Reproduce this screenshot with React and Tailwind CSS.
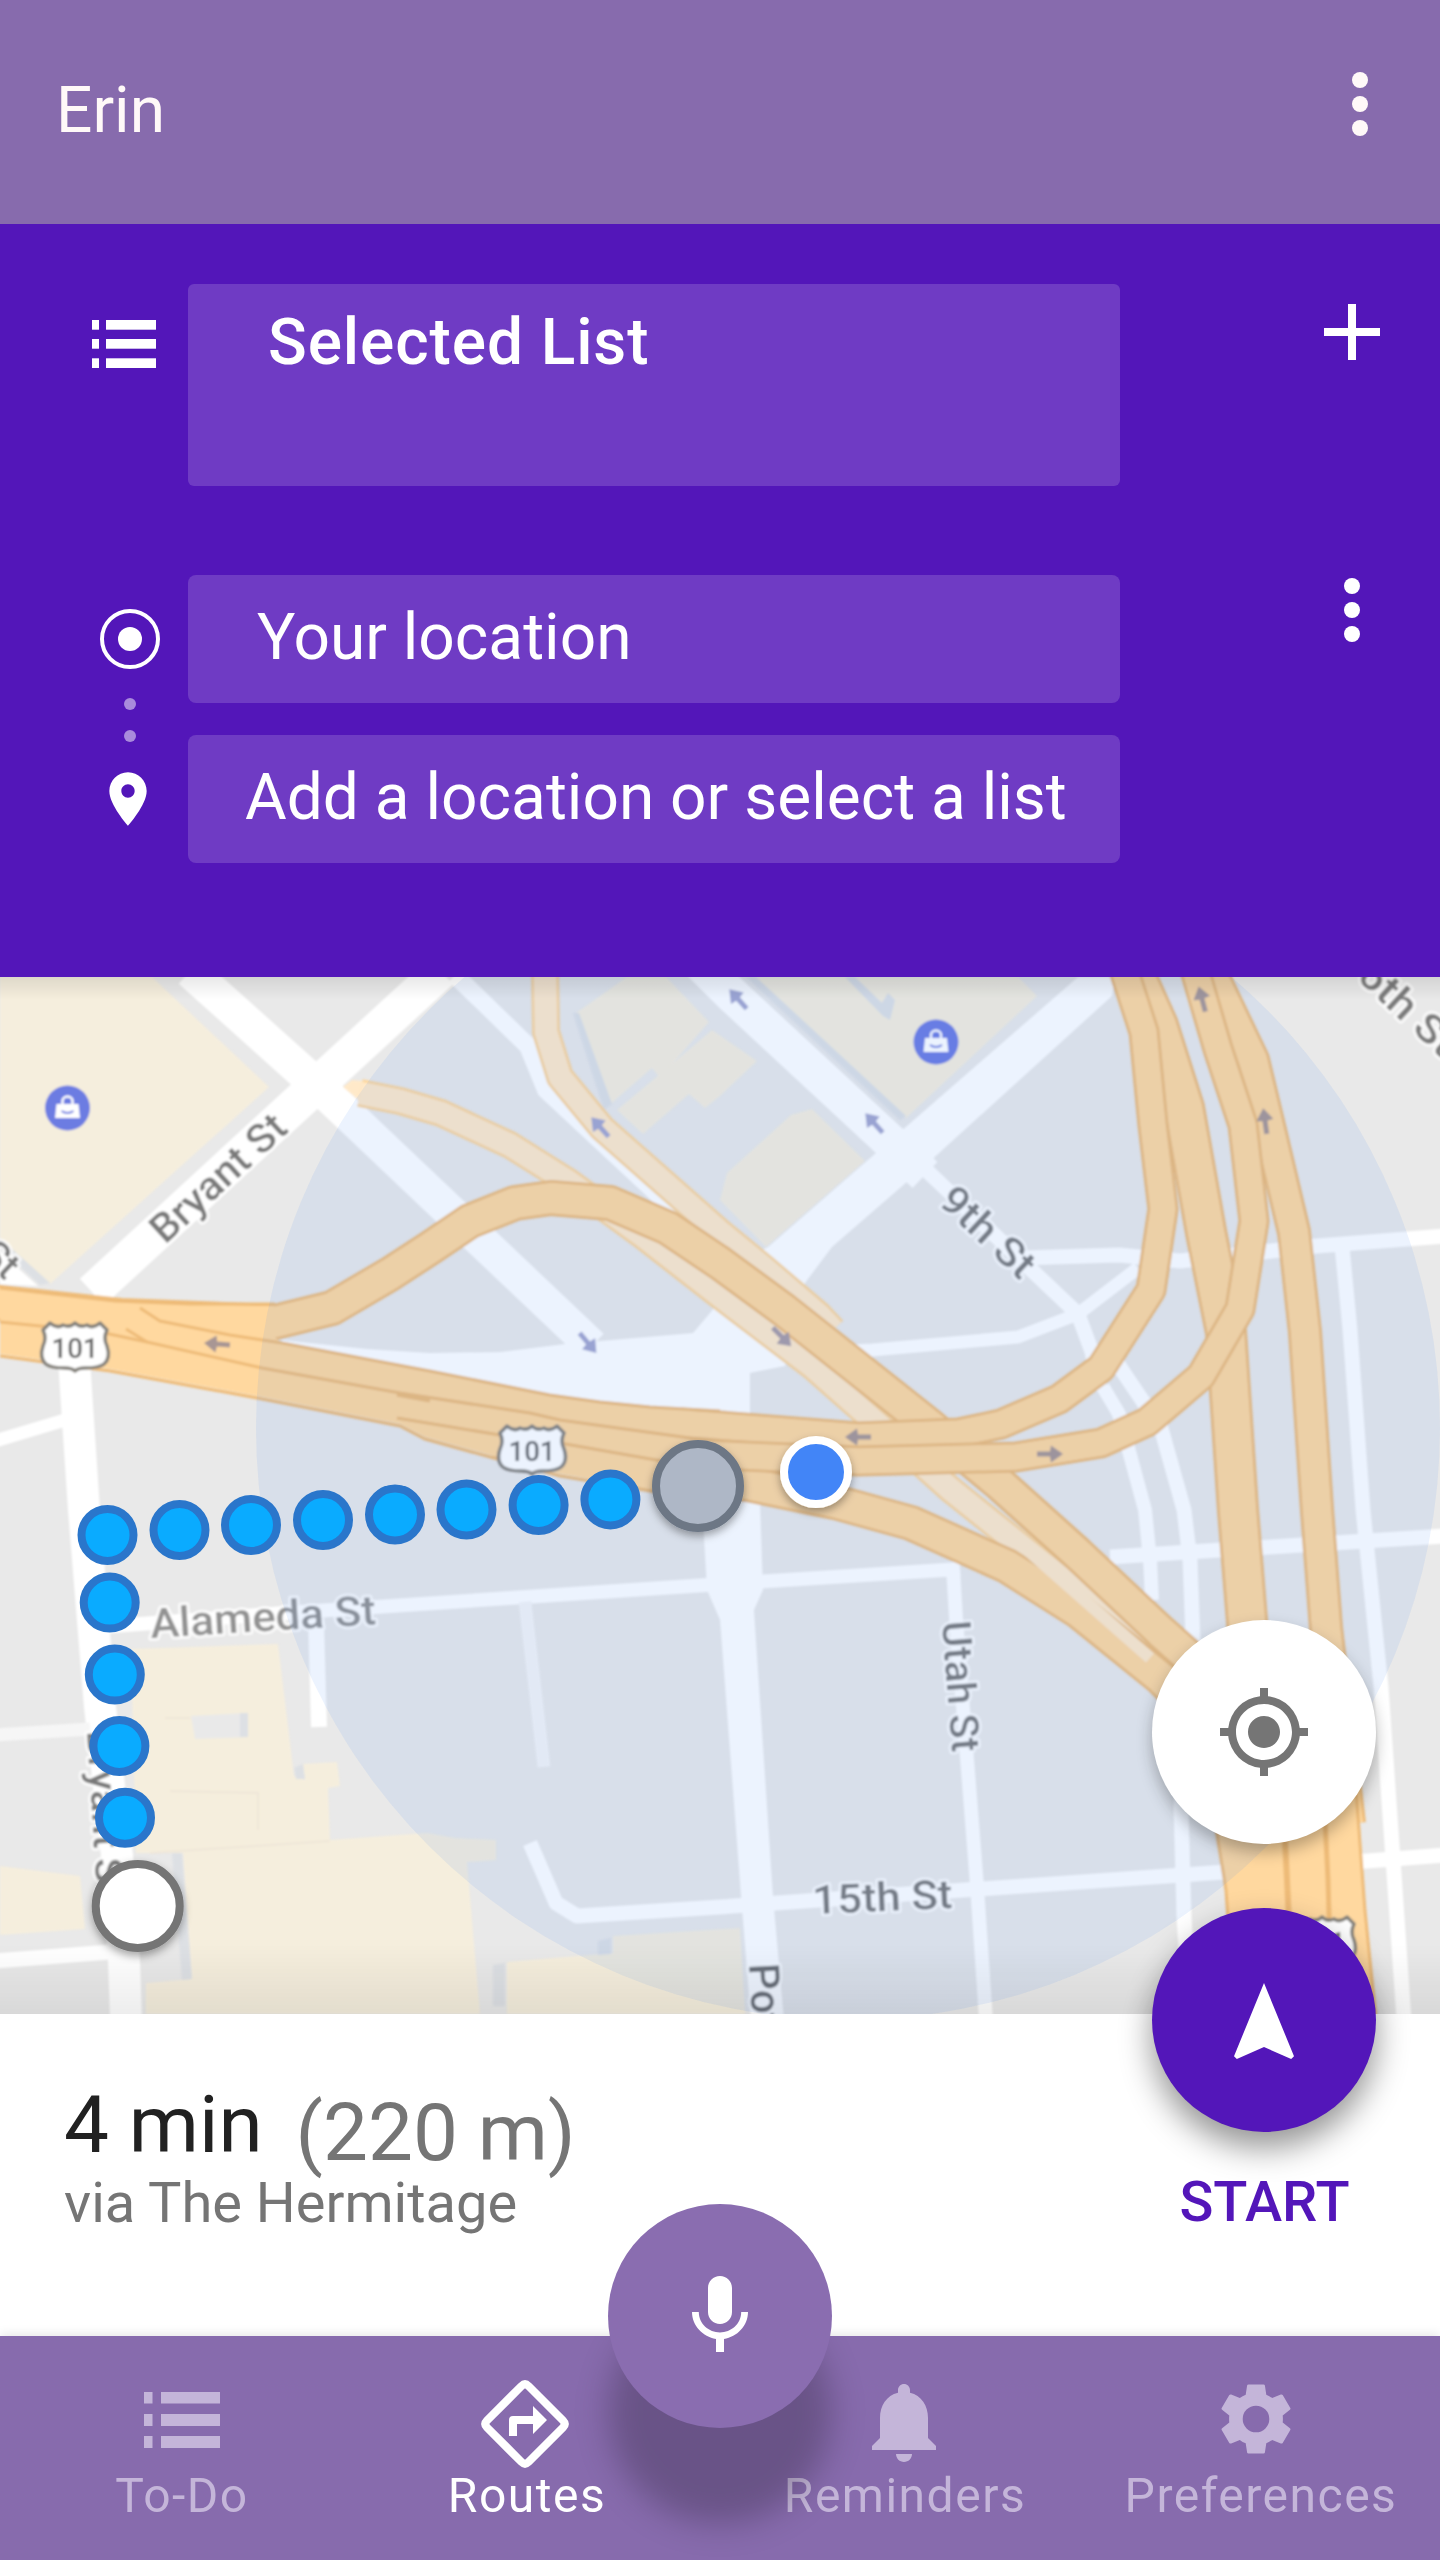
const HWY = "#ffd89f";
const HWY_EDGE = "#eebb78";
const RAMP = "#ffe9c9";
const RAMP_EDGE = "#fcd69c";

function Road({ pts, w, color = "#ffffff", edge }) {
  return (
    <g fill="none" strokeLinejoin="round">
      {edge && <polyline points={pts} stroke={edge} strokeWidth={w + 2} />}
      <polyline points={pts} stroke={color} strokeWidth={edge ? w - 3.5 : w} />
    </g>
  );
}

function StreetName({ x, y, angle, length, size = 38, color = "#7a7a7a", anchor = "start", children }) {
  return (
    <text
      transform={`translate(${x} ${y}) rotate(${angle})`}
      fontSize={size}
      fontWeight="500"
      fill={color}
      stroke="#ffffff"
      strokeOpacity="0.75"
      strokeWidth="6"
      strokeLinejoin="round"
      paintOrder="stroke"
      textAnchor={anchor}
      textLength={length}
      lengthAdjust="spacingAndGlyphs"
    >
      {children}
    </text>
  );
}

function Shield({ x, y, label = "101" }) {
  return (
    <g transform={`translate(${x} ${y})`}>
      <path
        d="M-25 -23 Q-18 -17 -12 -21 Q-5 -18 0 -23 Q5 -18 12 -21 Q18 -17 25 -23 L32 -16 Q28 -8 32 0 Q36 12 29 18 Q24 22 10 22 Q3 22 0 25 Q-3 22 -10 22 Q-24 22 -29 18 Q-36 12 -32 0 Q-28 -8 -32 -16 Z"
        fill="#ffffff"
        stroke="#85827c"
        strokeWidth="3.5"
        strokeLinejoin="round"
      />
      <text y="12" fontSize="27" fontWeight="500" fill="#666666" textAnchor="middle" textLength="47" lengthAdjust="spacingAndGlyphs">
        {label}
      </text>
    </g>
  );
}

function Arrow({ x, y, angle, color = "#a3a6cf" }) {
  return (
    <path
      transform={`translate(${x} ${y}) rotate(${angle})`}
      d="M13 0 L1 -8.500 L0 -2.500 L-13 -2.500 L-13 2.500 L0 2.500 L1 8.500 Z"
      fill={color}
    />
  );
}

function ShopPin({ x, y }) {
  return (
    <g transform={`translate(${x} ${y})`}>
      <circle r="22.5" fill="#6c7ce2" />
      <path d="M-11 -4 H11 L12.5 10 H-12.5 Z" fill="#ffffff" />
      <path d="M-5 -4 V-7 A5 4.500 0 0 1 5 -7 V-4" fill="none" stroke="#ffffff" strokeWidth="2.500" />
      <path d="M-6 3 Q0 7 6 3" fill="none" stroke="#6c7ce2" strokeWidth="2" />
    </g>
  );
}

const ROUTE = [
  [107.5, 1535], [179.5, 1530], [251, 1525], [323, 1520], [395, 1514.5], [466.5, 1509.5], [538.6, 1505], [610.4, 1499.4],
  [109.7, 1602.6], [114.8, 1674.6], [119.4, 1746], [125, 1817.8],
];

function MapView() {
  return (
    <svg className="block h-full w-full" viewBox="0 977 1440 1037" fontFamily="Roboto, sans-serif">
      <defs>
        <linearGradient id="fadeBottom" x1="0" y1="0" x2="0" y2="1">
          <stop offset="0" stopColor="#000" stopOpacity="0" />
          <stop offset="1" stopColor="#000" stopOpacity="0.07" />
        </linearGradient>
        <linearGradient id="fadeTop" x1="0" y1="0" x2="0" y2="1">
          <stop offset="0" stopColor="#000" stopOpacity="0.09" />
          <stop offset="1" stopColor="#000" stopOpacity="0" />
        </linearGradient>
        <filter id="soft" x="0" y="0" width="1" height="1">
          <feGaussianBlur stdDeviation="1" />
        </filter>
        <filter id="drop" x="-30%" y="-30%" width="160%" height="160%">
          <feDropShadow dx="0" dy="4" stdDeviation="4" floodColor="#000" floodOpacity="0.35" />
        </filter>
      </defs>
      <rect x="0" y="977" width="1440" height="1037" fill="#e9e9e9" />
      <g filter="url(#soft)">
        {/* building and park blocks */}
        <g fill="#f5eedd">
          <polygon points="0,977 152,977 269,1087 50,1284 0,1240" />
          <polygon points="0,1866 80,1876 85,1929 0,1935" />
          <polygon points="131,1649 278,1644 294,1776 305,1780 303,1764 337,1762 340,1786 328,1788 330,1840 427,1833 455,1838 496,1840 496,1860 467,1862 480,2014 146,2014 146,1983 192,1979 183,1853 136,1853" />
          <polygon points="507,2014 507,1962 613,1953 613,1936 740,1928 745,2014" />
          <polygon points="576,1013 627,977 666,977 709,1022 660,1078 652,1068 606,1108" />
          <polygon points="617,1110 660,1074 712,1030 757,1061 720,1096 705,1108 689,1094 643,1134" />
          <polygon points="752,977 1018,977 1037,996 906,1118" />
          <polygon points="727,1173 791,1115 812,1109 865,1161 766,1247 720,1200" />
        </g>
        <polygon points="191,1716 248,1713 248,1737 195,1739" fill="#e9e9e9" />
        <g fill="#dde0e4">
          <polygon points="240,1713 248,1713 248,1737 240,1737" />
          <polygon points="172,1853 182,1853 192,1979 182,1980" />
          <polygon points="294,1768 303,1764 305,1779 296,1779" />
          <polygon points="493,1965 505,1963 505,2006 493,2006" />
          <polygon points="598,1941 611,1938 611,1954 598,1955" />
          <polygon points="0,1238 50,1283 40,1285 0,1248" />
          <polygon points="746,977 756,977 906,1116 900,1120" />
          <polygon points="845,977 855,977 882,1003 888,993 895,1000 890,1020 883,1016" />
          <polygon points="573,1013 579,1013 612,1104 604,1110" />
        </g>
        <g fill="none" stroke="#efe6d8" strokeWidth="2">
          <polyline points="165,1718 190,1718" />
          <polyline points="170,1791 258,1793 258,1830" />
          <polyline points="150,1853 330,1841" />
        </g>

        {/* local streets */}
        <polygon points="0,1252 38,1286 0,1284" fill="#ffffff" />
        <polygon points="282,1340 367,1349 430,1353 500,1352 565,1344 611,1340 693,1333 715,1307 740,1262 768,1247 1078,977 1115,977 1112,996 915,1175 832,1247 805,1283 790,1340 785,1366 750,1373 750,1435 690,1430 285,1360" fill="#ffffff" />
        <Road pts="190,971 317,1085 592,1346" w={34} />
        <Road pts="441,971 317,1085 92,1292" w={36} />
        <Road pts="455,975 528,1046 546,1090 606,1146 720,1252 745,1275" w={18} />
        <Road pts="700,963 731,994 897,1148 925,1175" w={36} />
        <Road pts="905,1150 1078,1314 1092,1352 1100,1390" w={15} />
        <Road pts="1103,1387 1119,1414 1145,1510 1150,1560 1152,1600" w={14} />
        <Road pts="1115,1360 1161,1428 1184,1510 1190,1560 1193,1640 1181,1807 1184,1917 1190,2014" w={15} />
        <Road pts="760,1355 872,1350 1018,1337 1078,1314 1138,1268" w={13} />
        <Road pts="1020,1258 1119,1255 1180,1261 1317,1246 1445,1236" w={15} />
        <Road pts="1342,1246 1350,1330 1363,1510 1381,1687 1393,1859 1404,2020" w={15} />
        <Road pts="74,1360 84,1510 100,1707 117,1855 124,1960 126,2020" w={32} />
        <Road pts="-5,1441 65,1420" w={13} />
        <Road pts="-5,1735 90,1729" w={13} color="#f6f6f6" />
        <Road pts="-5,1961 110,1952" w={15} />
        <Road pts="100,1627 285,1613 707,1585 960,1569" w={14} />
        <Road pts="1110,1557 1445,1536" w={15} />
        <Road pts="316,1620 319,1727" w={16} />
        <Road pts="525,1602 544,1767" w={13} color="#f4f4f5" />
        <Road pts="530,1843 556,1903 577,1916 720,1907 1225,1872 1445,1855" w={15} />
        <Road pts="953,1568 956,1618 977,1886 986,2020" w={14} />
        <polygon points="700,1470 759,1470 763,1590 754,1610 773,1896 784,2020 751,2020 741,1896 720,1620 707,1590" fill="#ffffff" />

        {/* light ramps */}
        <polygon points="343,1087 352,1080 372,1082 380,1108 366,1106" fill={RAMP} />
        <Road pts="360,1093 400,1101 441,1113 510,1145 569,1182 643,1236 720,1296 812,1366 881,1427 950,1489 1041,1562 1161,1655" w={26} color={RAMP} edge={RAMP_EDGE} />
        <Road pts="545,970 546,1032 560,1077 602,1128 720,1232 764,1268 819,1315 833,1330" w={26} color={RAMP} edge={RAMP_EDGE} />

        {/* highways */}
        <Road pts="496,1440 656,1475 748,1484 835,1502 911,1523 1007,1566 1078,1611 1161,1678 1230,1748" w={34} color={HWY} edge={HWY_EDGE} />
        <Road pts="-10,1302 120,1316 275,1322 332,1308 390,1274 430,1248 470,1221 515,1203 551,1198 610,1203 668,1228 720,1263 784,1310 929,1425 1000,1484 1078,1554 1161,1632 1215,1680" w={34} color={HWY} edge={HWY_EDGE} />
        <polyline points="950,1482 1041,1562 1150,1658" fill="none" stroke={RAMP} strokeWidth="12" />
        <Road pts="1133,970 1158,1026 1184,1108 1206,1232 1226,1332 1238,1510 1247,1621 1258,1830" w={40} color={HWY} edge={HWY_EDGE} />
        <Road pts="1210,970 1253,1060 1271,1135 1294,1232 1305,1332 1317,1510 1326,1628 1349,1824" w={32} color={HWY} edge={HWY_EDGE} />
        <Road pts="680,1423 720,1426 858,1437 959,1433 1001,1424 1059,1399 1101,1368 1151,1290 1163,1209 1153,1125 1144,1032 1124,970" w={29} color={HWY} edge={HWY_EDGE} />
        <Road pts="680,1452 720,1455 858,1461 1016,1457 1101,1443 1147,1422 1201,1376 1240,1309 1254,1221 1243,1125 1218,1049 1195,970" w={29} color={HWY} edge={HWY_EDGE} />
        <polygon points="0,1289 115,1302 190,1306 274,1306 274,1336 282,1344 430,1372 550,1396 650,1406 690,1410 690,1493 650,1489 560,1474 490,1455 425,1437 400,1424 257,1396 110,1369 0,1354" fill={HWY} />
        <polygon points="1215,1822 1358,1790 1365,1911 1376,2020 1235,2020 1225,1890" fill={HWY} />
        <g fill="none" stroke={HWY_EDGE} strokeWidth="3">
          <polyline points="0,1288 115,1301 190,1304 275,1304" />
          <polyline points="0,1356 110,1371 257,1398 400,1426 425,1439 490,1457 560,1476 650,1491 690,1494" />
          <polyline points="0,1322 100,1332 147,1342 262,1368 400,1393 530,1413 560,1420 690,1438" />
          <polyline points="397,1394 430,1400" strokeWidth="5" />
          <polyline points="397,1418 500,1435 560,1443 690,1466" />
          <polyline points="126,1329 147,1342" />
          <polyline points="140,1308 160,1321 230,1335 282,1343 430,1371 550,1395 600,1402 650,1407 720,1411" />
          <polyline points="1215,1822 1226,1890 1235,2020" />
          <polyline points="1356,1790 1365,1911 1376,2020" />
          <polyline points="1284,1820 1288,1900 1293,2014" strokeWidth="6" />
          <polyline points="1324,1800 1328,1880 1332,2014" strokeWidth="5" />
        </g>

        <Shield x={75} y={1346} />
        <Shield x={532} y={1449} />
        <Shield x={1322} y={1940} />

        <Arrow x={217} y={1344} angle={184} color="#a89694" />
        <Arrow x={600} y={1127} angle={228} />
        <Arrow x={588} y={1343} angle={50} />
        <Arrow x={738} y={999} angle={228} />
        <Arrow x={874} y={1123} angle={228} />
        <Arrow x={782} y={1337} angle={45} color="#a89ba5" />
        <Arrow x={858} y={1437} angle={180} color="#a89694" />
        <Arrow x={1050} y={1454} angle={0} color="#a89694" />
        <Arrow x={1202} y={999} angle={255} color="#a89694" />
        <Arrow x={1265} y={1121} angle={262} color="#a89694" />

        <ShopPin x={67.5} y={1108} />
        <ShopPin x={936} y={1042} />

        <StreetName x={165} y={1245} angle={-42.5} length={169} size={40}>Bryant St</StreetName>
        <StreetName x={937} y={1203} angle={43} length={114} size={40}>9th St</StreetName>
        <StreetName x={151} y={1638} angle={-3.5} length={226} size={41} color="#929292">Alameda St</StreetName>
        <StreetName x={942} y={1622} angle={85.5} length={131} size={40}>Utah St</StreetName>
        <StreetName x={813} y={1914} angle={-2.5} length={140} size={40}>15th St</StreetName>
        <StreetName x={749} y={1964} angle={87} size={42} color="#6c6c6c">Pot</StreetName>
        <StreetName x={87} y={1731} angle={86.5} length={166}>Bryant St</StreetName>
        <StreetName x={1355} y={978} angle={43} length={118} size={41}>6th St</StreetName>
        <StreetName x={5} y={1281} angle={43} anchor="end">St</StreetName>
      </g>

      <circle cx="848" cy="1428" r="592" fill="#4285f4" fillOpacity="0.1" />
      <rect x="0" y="1944" width="1440" height="70" fill="url(#fadeBottom)" />
      <rect x="0" y="977" width="1440" height="22" fill="url(#fadeTop)" />

      {ROUTE.map(([x, y]) => (
        <circle key={`${x}-${y}`} cx={x} cy={y} r="26" fill="#0aabff" stroke="#2a76cb" strokeWidth="8" />
      ))}
      <circle cx="698" cy="1486" r="42" fill="#aeb7c6" stroke="#6d7785" strokeWidth="8" filter="url(#drop)" />
      <circle cx="137.700" cy="1906" r="42" fill="#ffffff" stroke="#757575" strokeWidth="8" filter="url(#drop)" />
      <circle cx="816" cy="1472" r="32" fill="#4285f7" stroke="#ffffff" strokeWidth="8" filter="url(#drop)" />
    </svg>
  );
}

function MoreDots({ className }) {
  return (
    <svg className={className} viewBox="0 0 24 24" fill="currentColor">
      <circle cx="12" cy="6" r="2" />
      <circle cx="12" cy="12" r="2" />
      <circle cx="12" cy="18" r="2" />
    </svg>
  );
}

function ListIcon({ className, viewBox, rows, dot, bar }) {
  return (
    <svg className={className} viewBox={viewBox} fill="currentColor">
      {rows.map(([y, h]) => (
        <g key={y}>
          <rect x="0" y={y} width={dot} height={h} />
          <rect x={bar[0]} y={y} width={bar[1]} height={h} />
        </g>
      ))}
    </svg>
  );
}

function TodoIcon() {
  return (
    <ListIcon className="h-14 w-[76px]" viewBox="0 0 76 56" rows={[[0, 11.5], [22, 12], [44, 12]]} dot={8.5} bar={[17, 59]} />
  );
}

function RoutesIcon() {
  return (
    <svg className="h-[96px] w-[96px]" viewBox="-48 -48 96 96">
      <path
        d="M-3.500 -38 Q0 -41.400 3.500 -38 L38 -3.500 Q41.400 0 38 3.500 L3.500 38 Q0 41.400 -3.500 38 L-38 3.500 Q-41.400 0 -38 -3.500 Z"
        fill="none"
        stroke="currentColor"
        strokeWidth="8"
      />
      <path d="M-16 12 V-4 Q-16 -8 -12 -8 H8 V-18 L22 -4 L8 10 V0 H-8 V12 Z" fill="currentColor" />
    </svg>
  );
}

function BellIcon() {
  return (
    <svg className="h-24 w-24" viewBox="0 0 24 24" fill="currentColor">
      <path d="M12 22c1.100 0 2-.900 2-2h-4c0 1.100.890 2 2 2zm6-6v-5c0-3.070-1.640-5.640-4.500-6.320V4c0-.830-.670-1.500-1.500-1.500s-1.500.670-1.500 1.500v.680C7.630 5.360 6 7.920 6 11v5l-2 2v1h16v-1l-2-2z" />
    </svg>
  );
}

function GearIcon() {
  return (
    <svg className="h-[72px] w-[72px]" viewBox="-36 -36 72 72" fill="currentColor" fillRule="evenodd">
      <path d="M-7.500 -34.600 H7.500 Q8.700 -34.600 8.900 -33.500 L10.300 -24.300 Q13.500 -23 16.200 -20.900 L24.800 -24.500 Q26 -24.900 26.700 -23.900 L34.300 -11 Q34.800 -10 33.900 -9.200 L26.700 -3.500 Q27.100 0 26.700 3.500 L33.900 9.200 Q34.800 10 34.300 11 L26.700 23.900 Q26 24.900 24.800 24.500 L16.200 20.900 Q13.500 23 10.300 24.300 L8.900 33.500 Q8.700 34.600 7.500 34.600 H-7.500 Q-8.700 34.600 -8.900 33.500 L-10.300 24.300 Q-13.500 23 -16.200 20.900 L-24.800 24.500 Q-26 24.900 -26.700 23.900 L-34.300 11 Q-34.800 10 -33.900 9.200 L-26.700 3.500 Q-27.100 0 -26.700 -3.500 L-33.900 -9.200 Q-34.800 -10 -34.300 -11 L-26.700 -23.900 Q-26 -24.900 -24.800 -24.500 L-16.200 -20.900 Q-13.500 -23 -10.300 -24.300 L-8.900 -33.500 Q-8.700 -34.600 -7.500 -34.600 Z M0 -13.300 A13.300 13.300 0 1 0 0 13.300 A13.300 13.300 0 1 0 0 -13.300 Z" />
    </svg>
  );
}

function Header() {
  return (
    <header className="flex h-[224px] items-start justify-between bg-[#876bad] pr-8 pl-14 text-[#fff9f8]">
      <h1 className="mt-[79px] text-[64px] leading-none font-normal">Erin</h1>
      <MoreDots className="mt-14 h-24 w-24" />
    </header>
  );
}

function SearchPanel() {
  return (
    <section className="flex h-[753px] bg-[#5316b9] text-white">
      <div className="flex w-[188px] flex-col">
        <ListIcon
          className="mt-24 ml-[92px] h-12 w-16"
          viewBox="0 0 64 48"
          rows={[[0, 9.7], [19, 9.7], [38.300, 9.700]]}
          dot={7}
          bar={[14, 50]}
        />
        <svg className="mt-[241px] ml-[100px] h-[60px] w-[60px]" viewBox="0 0 60 60">
          <circle cx="30" cy="30" r="28" fill="none" stroke="currentColor" strokeWidth="4" />
          <circle cx="30" cy="30" r="12" fill="currentColor" />
        </svg>
        <div className="mt-[29px] ml-[124px] flex flex-col gap-5">
          <span className="h-3 w-3 rounded-full bg-[#a98bdc]" />
          <span className="h-3 w-3 rounded-full bg-[#a98bdc]" />
        </div>
        <svg className="mt-[25px] ml-24 h-16 w-16" viewBox="0 0 24 24" fill="currentColor">
          <path d="M12 2C8.130 2 5 5.130 5 9c0 5.250 7 13 7 13s7-7.750 7-13c0-3.870-3.130-7-7-7zm0 9.500c-1.380 0-2.500-1.120-2.500-2.500s1.120-2.500 2.500-2.500 2.500 1.120 2.500 2.500-1.120 2.500-2.500 2.500z" />
        </svg>
      </div>
      <div className="flex w-[932px] flex-col pt-[60px] text-[64px] leading-none">
        <div className="h-[202px] rounded-[6px] bg-[#6f3bc4] pt-[27px] pl-20 font-medium tracking-[0.900px]">Selected List</div>
        <div className="mt-[89px] h-32 rounded-lg bg-[#6f3bc4] pt-[31px] pl-[69px] whitespace-nowrap">Your location</div>
        <div className="mt-8 h-32 rounded-lg bg-[#6f3bc4] pt-[31px] pl-[57px] whitespace-nowrap">Add a location or select a list</div>
      </div>
      <div className="ml-auto flex flex-col pr-10">
        <svg className="mt-[60px] h-24 w-24" viewBox="0 0 24 24" fill="currentColor">
          <path d="M19 13h-6v6h-2v-6H5v-2h6V5h2v6h6v2z" />
        </svg>
        <MoreDots className="mt-[182px] h-24 w-24" />
      </div>
    </section>
  );
}

function TripCard() {
  return (
    <section className="relative flex h-[322px] justify-between bg-white">
      <div className="pl-16">
        <div className="flex items-start leading-none">
          <span className="mt-[71px] text-[80px] text-[#212121]">4 min</span>
          <span className="mt-[79px] ml-[33px] text-[80px] text-[#757575]">(220 m)</span>
        </div>
        <p className="mt-[2px] text-[56px] leading-none text-[#757575]">via The Hermitage</p>
      </div>
      <div className="absolute -top-[394px] right-16 flex flex-col items-center">
        <button className="flex h-56 w-56 items-center justify-center rounded-full bg-white text-[#757575] shadow-[0_8px_16px_rgba(0,0,0,0.28)]">
          <svg className="h-24 w-24" viewBox="0 0 24 24" fill="currentColor">
            <path d="M12 8c-2.210 0-4 1.790-4 4s1.790 4 4 4 4-1.790 4-4-1.790-4-4-4zm8.940 3A8.994 8.994 0 0 0 13 3.060V1h-2v2.060A8.994 8.994 0 0 0 3.060 11H1v2h2.060A8.994 8.994 0 0 0 11 20.940V23h2v-2.060A8.994 8.994 0 0 0 20.940 13H23v-2h-2.060zM12 19c-3.870 0-7-3.130-7-7s3.130-7 7-7 7 3.130 7 7-3.130 7-7 7z" />
          </svg>
        </button>
        <button className="mt-16 flex h-56 w-56 items-center justify-center rounded-full bg-[#5316b9] pt-[6px] text-white shadow-[0_16px_32px_rgba(0,0,0,0.42)]">
          <svg className="h-24 w-24" viewBox="0 0 24 24" fill="currentColor">
            <path d="M12 2L4.500 20.290l.710.710L12 18l6.790 3 .710-.710z" />
          </svg>
        </button>
        <span className="mt-[42px] ml-[1px] text-[56px] leading-none font-medium text-[#5316b9]">START</span>
      </div>
    </section>
  );
}

function NavItem({ label, active, children, top, className }) {
  return (
    <a className={`relative flex flex-col items-center ${active ? "text-white" : "text-[#c4b5d9]"} ${className}`}>
      <span className={`flex h-[136px] items-start ${top}`}>{children}</span>
      <span className="text-[48px] leading-none tracking-[1.500px] whitespace-nowrap">{label}</span>
    </a>
  );
}

function BottomNav() {
  return (
    <nav className="relative h-[224px] bg-[#876bad] shadow-[0_-2px_10px_rgba(0,0,0,0.1)]">
      <div className="flex h-full">
        <NavItem label="To-Do" top="pt-[56px]" className="ml-[113px] w-[138px]">
          <TodoIcon />
        </NavItem>
        <NavItem label="Routes" active top="pt-[40px] -ml-[4px]" className="ml-[196px] w-[160px]">
          <RoutesIcon />
        </NavItem>
        <NavItem label="Reminders" top="pt-[38px] -ml-[2px]" className="ml-[176px] w-[244px]">
          <BellIcon />
        </NavItem>
        <NavItem label="Preferences" top="pt-[47px] -ml-[10px]" className="ml-[96px] w-[276px]">
          <GearIcon />
        </NavItem>
      </div>
      <div className="absolute inset-0 overflow-hidden">
        <div className="absolute top-[-36px] left-[608px] h-56 w-56 rounded-full bg-black/22 blur-[16px]" />
      </div>
      <button className="absolute -top-[132px] left-[608px] flex h-56 w-56 items-center justify-center rounded-full bg-[#8a6db0] text-white">
        <svg className="h-24 w-24" viewBox="0 0 24 24" fill="currentColor">
          <path d="M12 14c1.660 0 3-1.340 3-3V5c0-1.660-1.340-3-3-3S9 3.340 9 5v6c0 1.660 1.340 3 3 3zM17.300 11c0 3-2.540 5.100-5.300 5.100S6.700 14 6.700 11H5c0 3.410 2.720 6.230 6 6.720V21h2v-3.280c3.280-.480 6-3.300 6-6.720h-1.700z" />
        </svg>
      </button>
    </nav>
  );
}

export default function App() {
  return (
    <main className="flex h-[2560px] w-[1440px] flex-col overflow-hidden font-[Roboto,sans-serif]">
      <Header />
      <SearchPanel />
      <section className="h-[1037px]">
        <MapView />
      </section>
      <TripCard />
      <BottomNav />
    </main>
  );
}
